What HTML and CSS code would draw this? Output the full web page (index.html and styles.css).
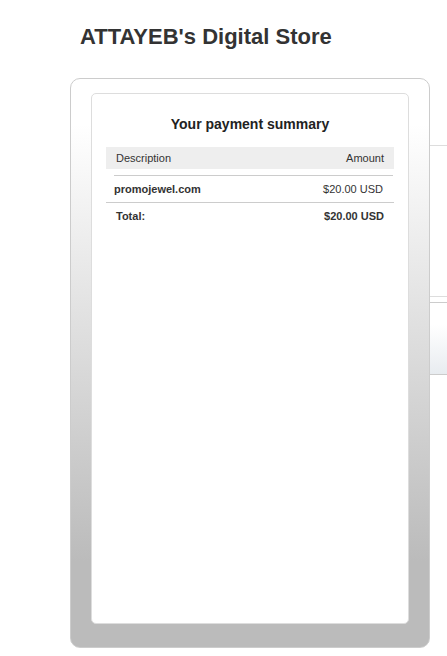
FILE: index.html
```html
<!DOCTYPE html>
<html lang="en">
<head>
<meta charset="UTF-8">
<meta name="viewport" content="width=device-width, initial-scale=1.0">
<title>ATTAYEB's Digital Store</title>
<link rel="stylesheet" href="styles.css">
</head>
<body>
<div class="page">
  <h1>ATTAYEB's Digital Store</h1>
  <div class="layout">
    <div class="cart">
      <div class="summary">
        <h2>Your payment summary</h2>
        <div class="table-head">
          <span>Description</span>
          <span>Amount</span>
        </div>
        <div class="item-row">
          <span class="item-name">promojewel.com</span>
          <span>$20.00 USD</span>
        </div>
        <div class="total-row">
          <span>Total:</span>
          <span>$20.00 USD</span>
        </div>
      </div>
    </div>
    <div class="side">
      <div class="side-top"></div>
      <div class="side-bottom"></div>
    </div>
  </div>
</div>
</body>
</html>
```

FILE: styles.css
```css
  body {
    margin: 0;
    padding: 0;
    font-family: "Liberation Sans", Arial, sans-serif;
    color: #333;
    background: #fff;
    overflow: hidden;
  }
  .page {
    padding-left: 70px;
  }
  h1 {
    margin: 0;
    padding: 24px 0 0 10px;
    font-size: 22px;
    line-height: 26px;
    font-weight: bold;
  }
  .layout {
    display: flex;
    margin-top: 28px;
  }
  .cart {
    flex: none;
    width: 318px;
    height: 531px;
    padding: 14px 20px 23px 20px;
    border: 1px solid #ccc;
    border-radius: 10px;
    background: linear-gradient(to bottom, #fff 8%, #bbb 85%);
  }
  .summary {
    height: 100%;
    box-sizing: border-box;
    background: #fff;
    border: 1px solid #ddd;
    border-radius: 5px;
    padding: 21px 14px 0 14px;
  }
  h2 {
    margin: 0 0 14px 0;
    text-align: center;
    font-size: 14px;
    line-height: 18px;
    color: #222;
  }
  .table-head {
    display: flex;
    justify-content: space-between;
    height: 22px;
    line-height: 22px;
    padding: 0 10px;
    background: #eee;
    font-size: 11px;
  }
  .item-row {
    display: flex;
    justify-content: space-between;
    margin: 6px 1px 0 8px;
    padding: 0 10px 0 0;
    height: 26px;
    line-height: 27px;
    border-top: 1px solid #ccc;
    font-size: 11px;
  }
  .item-name {
    font-weight: bold;
  }
  .total-row {
    display: flex;
    justify-content: space-between;
    padding: 0 10px;
    height: 27px;
    line-height: 27px;
    border-top: 1px solid #ccc;
    font-size: 11px;
    font-weight: bold;
  }
  .side {
    flex: 1;
    min-width: 30px;
    margin-top: 67px;
  }
  .side-top {
    height: 150px;
    border-top: 1px solid #ddd;
    border-bottom: 1px solid #ddd;
  }
  .side-bottom {
    margin-top: 5px;
    height: 71px;
    border-top: 1px solid #ccc;
    border-bottom: 1px solid #ccc;
    background: linear-gradient(to bottom, #fff 30%, #e8ecf0);
  }
```
